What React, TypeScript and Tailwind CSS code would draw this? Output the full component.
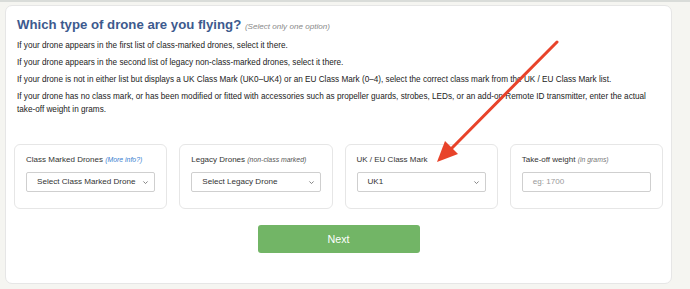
import React from 'react';

// small card wrapping a label + a control
const FieldCard: React.FC<{ label: string; note?: React.ReactNode; children: React.ReactNode }> = ({ label, note, children }) => (
  <div className="flex-1 bg-white border border-[#e6e6e6] rounded-[6px] px-[11px] pt-[9px] pb-[16px]">
    <div className="text-[8px] text-[#333] mb-[6px] leading-[12px]">
      {label} {note}
    </div>
    {children}
  </div>
);

const Chevron = () => (
  <svg className="w-[7px] h-[7px]" viewBox="0 0 10 10" fill="none" stroke="#777" strokeWidth="1.3">
    <path d="M2 3.5l3 3 3-3" />
  </svg>
);

const SelectBox: React.FC<{ text: string }> = ({ text }) => (
  <div className="h-[20px] border border-[#cfcfcf] rounded-[2px] bg-white flex items-center justify-between pl-[10px] pr-[5px] text-[8.1px] text-[#333]">
    <span>{text}</span>
    <Chevron />
  </div>
);

export default function App() {
  return (
    <div className="relative w-[690px] h-[289px] bg-[#f5f5f1] border-t-2 border-[#d9dcd9] overflow-hidden" style={{ fontFamily: '"Liberation Sans", Arial, sans-serif' }}>
      <div className="ml-[5px] mt-[3px] w-[667px] h-[279px] bg-white border border-[#e6e6e6] rounded-[7px] px-[11px] pt-[11px]">
        <h1 className="text-[#3d5a8e] font-bold text-[13.2px] leading-[16px]">
          Which type of drone are you flying?{' '}
          <span className="text-[8.1px] font-normal italic text-[#8a8a8a]">(Select only one option)</span>
        </h1>
        <div className="text-[8.2px] text-[#222] leading-[13px] mt-[4px] flex flex-col gap-[4px]">
          <p>If your drone appears in the first list of class-marked drones, select it there.</p>
          <p>If your drone appears in the second list of legacy non-class-marked drones, select it there.</p>
          <p>If your drone is not in either list but displays a UK Class Mark (UK0–UK4) or an EU Class Mark (0–4), select the correct class mark from the UK / EU Class Mark list.</p>
          <p className="pr-[8px]">If your drone has no class mark, or has been modified or fitted with accessories such as propeller guards, strobes, LEDs, or an add-on Remote ID transmitter, enter the actual take-off weight in grams.</p>
        </div>

        <div className="flex gap-[12px] mt-[28px] -mx-[3px]">
          <FieldCard label="Class Marked Drones" note={<i className="text-[6.9px] text-[#3b7fd1]">(More info?)</i>}>
            <SelectBox text="Select Class Marked Drone" />
          </FieldCard>
          <FieldCard label="Legacy Drones" note={<i className="text-[6.9px] text-[#555]">(non-class marked)</i>}>
            <SelectBox text="Select Legacy Drone" />
          </FieldCard>
          <FieldCard label="UK / EU Class Mark">
            <SelectBox text="UK1" />
          </FieldCard>
          <FieldCard label="Take-off weight" note={<i className="text-[6.9px] text-[#777]">(in grams)</i>}>
            <div className="h-[20px] border border-[#cfcfcf] rounded-[2px] bg-white flex items-center pl-[10px] text-[8.1px] text-[#9a9a9a]">eg: 1700</div>
          </FieldCard>
        </div>

        <div className="flex justify-center mt-[16px]">
          <button className="w-[162px] h-[28px] bg-[#72b566] rounded-[3px] text-white text-[10.7px]">Next</button>
        </div>
      </div>

      {/* red annotation arrow */}
      <svg className="absolute left-0 top-0 pointer-events-none" width="690" height="289">
        <line x1="557" y1="40" x2="452" y2="146" stroke="#e8432a" strokeWidth="3" strokeLinecap="round" />
        <polygon points="437,160 445,139 458,152" fill="#e8432a" />
      </svg>
    </div>
  );
}
